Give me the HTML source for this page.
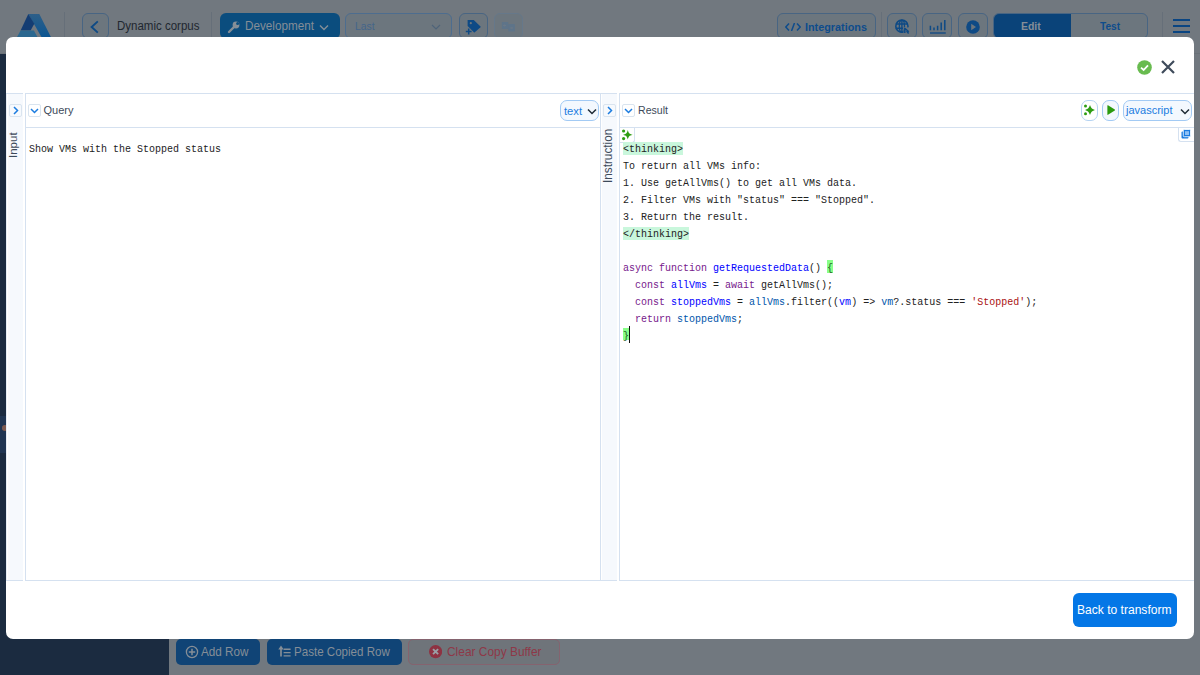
<!DOCTYPE html>
<html><head><meta charset="utf-8">
<style>
*{box-sizing:border-box;margin:0;padding:0}
html,body{width:1200px;height:675px;overflow:hidden;background:#71787f;font-family:"Liberation Sans",sans-serif;position:relative}
.a{position:absolute}
.t{position:absolute;line-height:1;white-space:nowrap}
.tb{position:absolute;top:13px;height:26px;border:1px solid #486583;border-radius:6px;background:#6c767e}
.sep{position:absolute;top:12px;width:1px;height:26px;background:#666f79}
.ln{position:absolute;background:#d5e1f0}
.strip{position:absolute;background:#f6f9fd}
.sbtn{position:absolute;width:13px;height:13px;border:1px solid #d9e4ef;border-radius:2px}
.sel{position:absolute;border:1.2px solid #a2caf4;border-radius:7px;background:#f3f8fe}
.mono{font-family:"Liberation Mono",monospace;font-size:10px;line-height:17px;color:#222;white-space:pre;position:absolute}
.k{color:#77208c}.d{color:#00f}.v{color:#05a}.s{color:#a11}
.hl{}
.mb{color:#1f5f1f}
</style></head><body>
<div class="a" style="left:0;top:53px;width:1200px;height:1px;background:#6a7178"></div>
<div class="a" style="left:0;top:54px;width:169px;height:621px;background:#1b2b40"></div>
<div class="a" style="left:0;top:416px;width:169px;height:37px;background:#203552"></div>
<div class="a" style="left:2.2px;top:425.3px;width:5.6px;height:5.6px;border-radius:50%;background:#7d5a50"></div>
<svg class="a" style="left:14px;top:10px" width="42" height="28" viewBox="0 0 42 28">
<defs><linearGradient id="lg1" x1="0" y1="0" x2="0" y2="1"><stop offset="0" stop-color="#2d5f88"/><stop offset="1" stop-color="#0b5592"/></linearGradient></defs>
<polygon points="14.3,3.9 25.3,3.9 37.4,28 28,28" fill="url(#lg1)"/>
<polygon points="14.3,3.9 20.3,13.7 16.6,20.4 6.6,20.4" fill="#143d73"/>
<polygon points="6.6,20.5 19.9,20.5 24,28 2.5,28" fill="#2b6890"/>
</svg>
<div class="sep" style="left:64px"></div>
<div class="tb" style="left:82px;width:27px"></div>
<svg class="a" style="left:88px;top:18px" width="14" height="18" viewBox="0 0 14 18"><path d="M9.8 3.4 L3.6 9 L9.8 14.6" stroke="#0e4a85" stroke-width="1.9" fill="none"/></svg>
<div class="t" style="left:116.80px;top:20.22px;font-size:12.5px;color:#1f272f;font-weight:400;transform:scaleX(0.920);transform-origin:0 0;">Dynamic corpus</div>
<div class="sep" style="left:211px"></div>
<div class="a" style="left:220px;top:13px;width:120px;height:26px;border-radius:6px;background:#0b4d7e"></div>
<svg class="a" style="left:227px;top:20px" width="14" height="14" viewBox="0 0 14 14"><path d="M2 12 L7 7" stroke="#858e97" stroke-width="2.4" stroke-linecap="round"/><circle cx="9" cy="5" r="3.4" fill="#858e97"/><circle cx="10.6" cy="3.4" r="1.5" fill="#0b4d7e"/></svg>
<div class="t" style="left:245.00px;top:20.47px;font-size:12.2px;color:#858e97;font-weight:400;transform:scaleX(0.960);transform-origin:0 0;">Development</div>
<svg class="a" style="left:319px;top:24px" width="10" height="7" viewBox="0 0 10 7"><path d="M1 1.5 L5 5.5 L9 1.5" stroke="#858e97" stroke-width="1.4" fill="none"/></svg>
<div class="tb" style="left:345px;width:107px;border-color:#4d6d8f"></div>
<div class="t" style="left:354.50px;top:21.44px;font-size:11px;color:#44658a;font-weight:400;transform:scaleX(0.940);transform-origin:0 0;">Last</div>
<svg class="a" style="left:431px;top:24px" width="10" height="6" viewBox="0 0 10 6"><path d="M1 1 L5 5 L9 1" stroke="#4f6479" stroke-width="1.2" fill="none"/></svg>
<div class="tb" style="left:459px;width:29px"></div>
<svg class="a" style="left:465px;top:18px" width="18" height="18" viewBox="0 0 18 18"><path d="M2.6 2.6 Q2.6 2 3.2 2 H8.75 L15.5 8.4 Q15.9 8.8 15.5 9.2 L9.8 14.3 Q9.3 14.7 8.9 14.3 L2.6 8 Z" fill="#0e4a85"/><circle cx="5.8" cy="5.2" r="1.1" fill="#6c767e"/><path d="M0.8 13.5 H6.6 M3.7 10.6 V16.4" stroke="#6c767e" stroke-width="3"/><path d="M0.8 13.5 H6.6 M3.7 10.6 V16.4" stroke="#0e4a85" stroke-width="1.5"/></svg>
<div class="tb" style="left:494px;width:29px;border-color:#66788a"></div>
<svg class="a" style="left:501px;top:21px" width="15" height="11" viewBox="0 0 15 11"><rect x="0.8" y="1" width="6.5" height="7" rx="0.8" fill="#5e7489"/><rect x="7.2" y="3" width="6.7" height="7.6" rx="0.8" fill="#5e7489"/><path d="M5 4.5 H2.5 M3.5 3.5 L2.5 4.5 L3.5 5.5 M9 7 H11.5 M10.5 6 L11.5 7 L10.5 8" stroke="#6f7a86" stroke-width="0.8" fill="none"/></svg>
<div class="tb" style="left:777px;width:99px"></div>
<svg class="a" style="left:785px;top:23px" width="16" height="8" viewBox="0 0 16 8"><path d="M4 0.5 L0.8 4 L4 7.5 M12 0.5 L15.2 4 L12 7.5 M9.5 0 L6.5 8" stroke="#0e4c8c" stroke-width="1.5" fill="none"/></svg>
<div class="t" style="left:805.00px;top:21.51px;font-size:10.5px;color:#0e4c8c;font-weight:700;transform:scaleX(1.030);transform-origin:0 0;">Integrations</div>
<div class="sep" style="left:881px"></div>
<div class="tb" style="left:887px;width:30px"></div>
<svg class="a" style="left:892px;top:16px" width="20" height="20" viewBox="0 0 20 20"><circle cx="9.9" cy="10.2" r="6.1" stroke="#0e4a85" stroke-width="1.6" fill="none"/><path d="M3.8 8 H16 M3.8 12.2 H11 M9.9 4 V16.4" stroke="#0e4a85" stroke-width="1.4"/><ellipse cx="9.9" cy="10.2" rx="2.6" ry="6.1" stroke="#0e4a85" stroke-width="1.3" fill="none"/><rect x="11.6" y="11.4" width="8" height="8" fill="#6c767e"/><path d="M12.8 12 V17 M12.8 12.3 L16.8 15.8 M14.6 15 L16.6 17.4" stroke="#0e4a85" stroke-width="1.5" fill="none"/></svg>
<div class="tb" style="left:922px;width:30px"></div>
<svg class="a" style="left:928px;top:18px" width="20" height="16" viewBox="0 0 20 16"><path d="M2 15 H17.8" stroke="#0e4a85" stroke-width="1.3"/><path d="M2.4 12.3 V7.8 M6 12.3 V9.6 M9.6 12.3 V7.8 M13.2 12.3 V4.6 M16.8 12.3 V1.9" stroke="#0e4a85" stroke-width="1.5"/></svg>
<div class="tb" style="left:958px;width:30px"></div>
<svg class="a" style="left:964.7px;top:18.7px" width="16" height="16" viewBox="0 0 16 16"><circle cx="8" cy="8" r="6.8" fill="#0e4a85"/><path d="M6.2 4.8 L11 8 L6.2 11.2 Z" fill="#6c767e"/></svg>
<div class="a" style="left:993px;top:13px;width:155px;height:26px;border:1px solid #486583;border-radius:6px;overflow:hidden;background:#6c767e"><div class="a" style="left:-1px;top:-1px;width:78px;height:28px;background:#0a4379"></div></div>
<div class="t" style="left:1021.00px;top:21.49px;font-size:11px;color:#858e97;font-weight:700;transform:scaleX(0.950);transform-origin:0 0;">Edit</div>
<div class="t" style="left:1099.50px;top:21.49px;font-size:11px;color:#0e4c8c;font-weight:700;transform:scaleX(0.920);transform-origin:0 0;">Test</div>
<div class="sep" style="left:1162px"></div>
<div class="a" style="left:1173px;top:19px;width:17px;height:2px;background:#0a4582"></div>
<div class="a" style="left:1173px;top:25px;width:17px;height:2px;background:#0a4582"></div>
<div class="a" style="left:1173px;top:31px;width:17px;height:2px;background:#0a4582"></div>
<div class="a" style="left:175.5px;top:638.5px;width:84px;height:26.5px;border-radius:5px;background:#104476"></div>
<svg class="a" style="left:185px;top:645px" width="14" height="14" viewBox="0 0 14 14"><circle cx="7" cy="7" r="5.6" stroke="#858e97" stroke-width="1.3" fill="none"/><path d="M7 3.8 V10.2 M3.8 7 H10.2" stroke="#858e97" stroke-width="1.5"/></svg>
<div class="t" style="left:201.00px;top:645.39px;font-size:13px;color:#858e97;font-weight:400;transform:scaleX(0.900);transform-origin:0 0;">Add Row</div>
<div class="a" style="left:267px;top:638.5px;width:134.5px;height:26.5px;border-radius:5px;background:#104476"></div>
<svg class="a" style="left:277px;top:644px" width="16" height="14" viewBox="0 0 16 14"><path d="M1.3 5.6 L4 1.4 L6.7 5.6 Z" fill="#858e97"/><path d="M4 5 V12.6" stroke="#858e97" stroke-width="1.7"/><path d="M6.6 5.3 H13.6 M6.6 8.6 H13.6 M6.6 11.9 H13.6" stroke="#858e97" stroke-width="1.4"/></svg>
<div class="t" style="left:294.00px;top:645.39px;font-size:13px;color:#858e97;font-weight:400;transform:scaleX(0.890);transform-origin:0 0;">Paste Copied Row</div>
<div class="a" style="left:408px;top:638.5px;width:152px;height:26.5px;border:1px solid #85636f;border-radius:5px;background:#6f747a"></div>
<svg class="a" style="left:429px;top:645.4px" width="13.2" height="13.2" viewBox="0 0 14 14"><circle cx="7" cy="7" r="7" fill="#8e3242"/><path d="M4.3 4.3 L9.7 9.7 M9.7 4.3 L4.3 9.7" stroke="#9aa0a6" stroke-width="2"/></svg>
<div class="t" style="left:447.00px;top:644.99px;font-size:13px;color:#8e3848;font-weight:400;transform:scaleX(0.917);transform-origin:0 0;">Clear Copy Buffer</div>
<div class="a" style="left:6px;top:37px;width:1188px;height:601.5px;background:#fff;border-radius:7px"></div>
<svg class="a" style="left:1137px;top:60px" width="15" height="15" viewBox="0 0 15 15"><circle cx="7.5" cy="7.5" r="7.3" fill="#68bb4f"/><path d="M4 7.7 L6.6 10 L11 5.3" stroke="#fff" stroke-width="1.8" fill="none"/></svg>
<svg class="a" style="left:1161px;top:60px" width="14" height="14" viewBox="0 0 14 14"><path d="M1 1 L13 13 M13 1 L1 13" stroke="#3f4b5b" stroke-width="2.2"/></svg>
<div class="strip" style="left:8px;top:94px;width:15px;height:486px"></div>
<div class="ln" style="left:6px;top:93px;width:1px;height:488px;opacity:.6"></div>
<div class="ln" style="left:6px;top:93px;width:17px;height:1px"></div>
<div class="ln" style="left:6px;top:580px;width:17px;height:1px"></div>
<div class="ln" style="left:25px;top:93px;width:576px;height:1px"></div>
<div class="ln" style="left:25px;top:127px;width:576px;height:1px"></div>
<div class="ln" style="left:25px;top:580px;width:576px;height:1px"></div>
<div class="ln" style="left:25px;top:93px;width:1px;height:488px"></div>
<div class="strip" style="left:602px;top:94px;width:15px;height:486px"></div>
<div class="ln" style="left:600px;top:93px;width:1px;height:488px;opacity:.6"></div>
<div class="ln" style="left:600px;top:93px;width:17px;height:1px"></div>
<div class="ln" style="left:600px;top:580px;width:17px;height:1px"></div>
<div class="ln" style="left:619px;top:93px;width:575px;height:1px"></div>
<div class="ln" style="left:619px;top:127px;width:575px;height:1px"></div>
<div class="ln" style="left:619px;top:580px;width:575px;height:1px"></div>
<div class="ln" style="left:619px;top:93px;width:1px;height:488px"></div>
<div class="ln" style="left:600px;top:93px;width:1px;height:488px"></div>
<div class="sbtn" style="left:9px;top:104px"></div>
<svg class="a" style="left:11px;top:106px" width="9" height="9" viewBox="0 0 9 9"><path d="M3 1 L6.5 4.5 L3 8" stroke="#1b7ce0" stroke-width="1.5" fill="none"/></svg>
<div class="t" style="left:8.26px;top:158.20px;font-size:11.5px;color:#3d4a5a;transform-origin:0 0;transform:rotate(-90deg)">Input</div>
<div class="sbtn" style="left:27.5px;top:104px;background:#fff"></div>
<svg class="a" style="left:29.5px;top:106px" width="9" height="9" viewBox="0 0 9 9"><path d="M1 3 L4.5 6.5 L8 3" stroke="#1b7ce0" stroke-width="1.5" fill="none"/></svg>
<div class="t" style="left:43.50px;top:104.99px;font-size:11px;color:#3d4a5a;font-weight:400;">Query</div>
<div class="sel" style="left:560px;top:99.5px;width:38.5px;height:21px"></div>
<div class="t" style="left:564.00px;top:105.52px;font-size:11.2px;color:#1b7ce0;font-weight:400;">text</div>
<svg class="a" style="left:587px;top:107.5px" width="10" height="7" viewBox="0 0 10 7"><path d="M1 1.5 L5 5.5 L9 1.5" stroke="#1f2a36" stroke-width="1.5" fill="none"/></svg>
<div class="mono" style="left:29px;top:141px">Show VMs with the Stopped status</div>
<div class="sbtn" style="left:603px;top:104px"></div>
<svg class="a" style="left:605px;top:106px" width="9" height="9" viewBox="0 0 9 9"><path d="M3 1 L6.5 4.5 L3 8" stroke="#1b7ce0" stroke-width="1.5" fill="none"/></svg>
<div class="t" style="left:602.27px;top:182.80px;font-size:12.2px;color:#3d4a5a;transform-origin:0 0;transform:rotate(-90deg) scaleX(0.965)">Instruction</div>
<div class="sbtn" style="left:621.5px;top:104px;background:#fff"></div>
<svg class="a" style="left:623.5px;top:106px" width="9" height="9" viewBox="0 0 9 9"><path d="M1 3 L4.5 6.5 L8 3" stroke="#1b7ce0" stroke-width="1.5" fill="none"/></svg>
<div class="t" style="left:637.50px;top:105.19px;font-size:11px;color:#3d4a5a;font-weight:400;transform:scaleX(0.960);transform-origin:0 0;">Result</div>
<div class="sel" style="left:1081.3px;top:99.5px;width:16.5px;height:21.2px;background:#fff;border-color:#b5d3f2"></div>
<svg class="a" style="left:1081.40px;top:103.30px" width="18.00" height="14.00"><path d="M9.00 2.00 C10.50 5.50 10.50 5.50 14.00 7.00 C10.50 8.50 10.50 8.50 9.00 12.00 C7.50 8.50 7.50 8.50 4.00 7.00 C7.50 5.50 7.50 5.50 9.00 2.00Z" fill="#2e9d13"/><circle cx="4.50" cy="3.10" r="1.5" fill="#2e9d13"/><circle cx="4.50" cy="10.80" r="1.5" fill="#2e9d13"/></svg>
<div class="sel" style="left:1102.3px;top:99.5px;width:17.2px;height:21.2px"></div>
<svg class="a" style="left:1106px;top:104px" width="10" height="12" viewBox="0 0 10 12"><path d="M1.4 1.6 Q1.4 1 2 1.3 L8.8 5.6 Q9.2 6 8.8 6.4 L2 10.8 Q1.4 11.1 1.4 10.4 Z" fill="#2a9a0e"/></svg>
<div class="sel" style="left:1123px;top:99.5px;width:69px;height:21px"></div>
<div class="t" style="left:1126.00px;top:105.09px;font-size:11px;color:#1b7ce0;font-weight:400;">javascript</div>
<svg class="a" style="left:1180px;top:107.5px" width="10" height="7" viewBox="0 0 10 7"><path d="M1 1.5 L5 5.5 L9 1.5" stroke="#1f2a36" stroke-width="1.5" fill="none"/></svg>
<div class="a" style="left:619px;top:127px;width:16px;height:15.8px;border-right:1px solid #d5e1f0;border-bottom:1px solid #d5e1f0;border-bottom-right-radius:3px"></div>
<svg class="a" style="left:618.60px;top:127.80px" width="17.60" height="13.60"><path d="M8.80 2.00 C9.95 5.65 9.95 5.65 13.60 6.80 C9.95 7.95 9.95 7.95 8.80 11.60 C7.65 7.95 7.65 7.95 4.00 6.80 C7.65 5.65 7.65 5.65 8.80 2.00Z" fill="#2e9d13"/><circle cx="4.60" cy="3.00" r="1.6" fill="#2e9d13"/><circle cx="4.60" cy="10.60" r="1.6" fill="#2e9d13"/></svg>
<div class="a" style="left:1178px;top:127px;width:16px;height:15px;border-left:1px solid #d5e1f0;border-bottom:1px solid #d5e1f0;border-bottom-left-radius:3px"></div>
<svg class="a" style="left:1181px;top:129px" width="10" height="10" viewBox="0 0 10 10"><rect x="0.5" y="2.5" width="7" height="7" rx="1" fill="#1b7ce0"/><rect x="2.3" y="0.5" width="7.2" height="7.2" rx="1" fill="#1b7ce0" stroke="#fff" stroke-width="0.8"/><rect x="4" y="2.2" width="4" height="3.8" fill="#8ec0f5"/></svg>
<div class="a" style="left:623px;top:142.4px;width:60px;height:12.2px;background:#c9f7dc"></div>
<div class="a" style="left:623px;top:227.4px;width:66px;height:12.2px;background:#c9f7dc"></div>
<div class="a" style="left:827px;top:260.4px;width:6px;height:12.8px;background:#8f8"></div>
<div class="a" style="left:623px;top:327.6px;width:6px;height:12.8px;background:#8f8"></div>
<div class="mono" style="left:623px;top:141px"><span class="hl">&lt;thinking&gt;</span>
To return all VMs info:
1. Use getAllVms() to get all VMs data.
2. Filter VMs with "status" === "Stopped".
3. Return the result.
<span class="hl">&lt;/thinking&gt;</span>

<span class="k">async</span> <span class="k">function</span> <span class="d">getRequestedData</span>() <span class="mb">{</span>
  <span class="k">const</span> <span class="d">allVms</span> = <span class="k">await</span> getAllVms();
  <span class="k">const</span> <span class="d">stoppedVms</span> = <span class="v">allVms</span>.filter((<span class="d">vm</span>) =&gt; <span class="v">vm</span>?.status === <span class="s">'Stopped'</span>);
  <span class="k">return</span> <span class="v">stoppedVms</span>;
<span class="mb">}</span></div>
<div class="a" style="left:628.6px;top:326px;width:1.2px;height:17px;background:#111"></div>
<div class="a" style="left:1072.5px;top:593px;width:104.5px;height:33.5px;border-radius:6px;background:#0477e6"></div>
<div class="t" style="left:1077.00px;top:604.42px;font-size:12.5px;color:#fff;font-weight:400;transform:scaleX(0.965);transform-origin:0 0;">Back to transform</div>
</body></html>
